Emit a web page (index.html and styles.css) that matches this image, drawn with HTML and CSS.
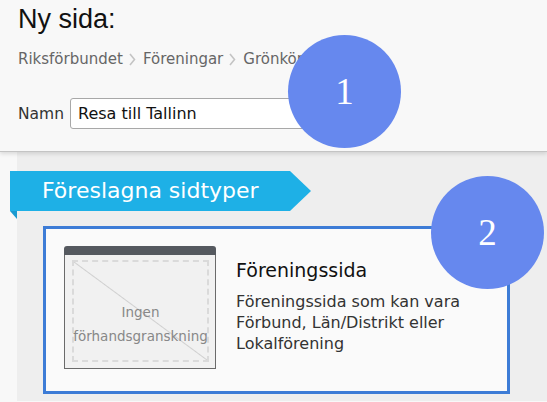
FILE: index.html
```html
<!DOCTYPE html>
<html lang="sv">
<head>
    <meta charset="UTF-8">
    <meta name="viewport" content="width=device-width, initial-scale=1.0">
    <title>Ny sida</title>
    <link rel="stylesheet" href="styles.css">
</head>
<body>
    <div class="header">
        <h1>Ny sida:</h1>

        <div class="breadcrumbs">
            <span>Riksförbundet</span>
            <svg class="crumb-sep" width="7" height="13" viewBox="0 0 7 13"><path d="M1 1 L5.5 6.5 L1 12" fill="none" stroke="#c4c4c4" stroke-width="1.6"/></svg>
            <span>Föreningar</span>
            <svg class="crumb-sep" width="7" height="13" viewBox="0 0 7 13"><path d="M1 1 L5.5 6.5 L1 12" fill="none" stroke="#c4c4c4" stroke-width="1.6"/></svg>
            <span>Grönköping</span>
        </div>

        <div class="name-row">
            <label for="name">Namn</label>
            <input type="text" id="name" value="Resa till Tallinn">
        </div>

        <div class="step step-1">1</div>
    </div>

    <div class="main">
        <div class="ribbon">Föreslagna sidtyper</div>

        <div class="page-type">
            <div class="preview">
                <div class="preview-bar"></div>
                <div class="preview-body">
                    <div class="preview-box">
                        <span>Ingen</span>
                        <span>förhandsgranskning</span>
                    </div>
                </div>
            </div>
            <div class="type-info">
                <h3>Föreningssida</h3>
                <p>Föreningssida som kan vara Förbund, Län/Distrikt eller Lokalförening</p>
            </div>
        </div>

        <div class="step step-2">2</div>
    </div>
</body>
</html>
```

FILE: styles.css
```css
body {
    margin: 0;
    padding: 0;
    background-color: #f8f8f8;
    font-family: "DejaVu Sans", Verdana, sans-serif;
    color: #333;
    height: 402px;
    overflow: hidden;
}

.header {
    position: relative;
    height: 152px;
    padding: 4px 18px 0;
    box-sizing: border-box;
    background-color: #f8f8f8;
    border-bottom: 1px solid #c4c4c4;
    box-shadow: 0 2px 4px rgba(0, 0, 0, 0.12);
    z-index: 1;
}

.header h1 {
    margin: 0;
    font-family: "Liberation Sans", Arial, sans-serif;
    font-weight: normal;
    font-size: 27px;
    line-height: 31px;
    color: #111;
}

.breadcrumbs {
    display: flex;
    align-items: center;
    gap: 6px;
    margin-top: 15px;
    font-size: 15px;
    line-height: 18px;
    color: #666;
    white-space: nowrap;
}

.crumb-sep {
    margin: 0 1px 0 0;
}

.name-row {
    display: flex;
    align-items: center;
    gap: 6px;
    margin-top: 30px;
}

.name-row label {
    font-size: 15.5px;
    color: #333;
}

.name-row input {
    width: 260px;
    height: 31px;
    box-sizing: border-box;
    padding: 0 7px;
    border: 1px solid #a8a8a8;
    border-radius: 3px;
    background: white;
    font-family: inherit;
    font-size: 16px;
    color: #111;
}

.step {
    position: absolute;
    width: 113px;
    height: 113px;
    border-radius: 50%;
    background-color: #6688ee;
    color: white;
    font-family: "Liberation Serif", "Times New Roman", serif;
    font-size: 37px;
    display: flex;
    align-items: center;
    justify-content: center;
    z-index: 2;
}

.step-1 {
    left: 288px;
    top: 35px;
}

.step-2 {
    left: 414px;
    top: 24px;
}

.main {
    position: relative;
    margin-left: 17px;
    height: 249px;
    padding-top: 19px;
    box-sizing: border-box;
    background-color: #eeeeee;
}

.ribbon {
    position: relative;
    width: 301px;
    height: 40px;
    margin-left: -7px;
    padding-left: 32px;
    box-sizing: border-box;
    background-color: #1eb0e6;
    color: white;
    font-size: 22px;
    line-height: 40px;
    clip-path: polygon(0 0, 280px 0, 100% 50%, 280px 100%, 0 100%);
}

/* little fold under the ribbon */
.main::before {
    content: "";
    position: absolute;
    left: -7px;
    top: 59px;
    border-top: 8px solid #1a9ad0;
    border-left: 7px solid transparent;
}

.page-type {
    display: flex;
    width: 467px;
    margin: 15px 0 0 26px;
    padding: 17px 18px 22px;
    box-sizing: border-box;
    border: 3px solid #3d7cd6;
    background-color: #fafafa;
}

.preview {
    width: 152px;
    flex-shrink: 0;
}

.preview-bar {
    height: 9px;
    background-color: #55595f;
    border-radius: 3px 3px 0 0;
}

.preview-body {
    height: 114px;
    box-sizing: border-box;
    padding: 5px 6px 6px 7px;
    border: 1px solid #6a6a6a;
    border-top: none;
    background-color: #f1f1f1;
}

.preview-box {
    height: 100%;
    box-sizing: border-box;
    padding-top: 38px;
    border: 2px dashed #dadada;
    background: linear-gradient(to top right, transparent calc(50% - 1px), #d0d0d0 50%, transparent calc(50% + 1px));
    display: flex;
    flex-direction: column;
    align-items: center;
    font-size: 13.5px;
    line-height: 24px;
    color: #888;
    white-space: nowrap;
}

.type-info {
    padding: 13px 0 0 20px;
}

.type-info h3 {
    margin: 0;
    font-weight: normal;
    font-size: 19px;
    line-height: 22px;
    color: #111;
}

.type-info p {
    margin: 10px 0 0;
    font-size: 16px;
    line-height: 21px;
    color: #333;
}
```
